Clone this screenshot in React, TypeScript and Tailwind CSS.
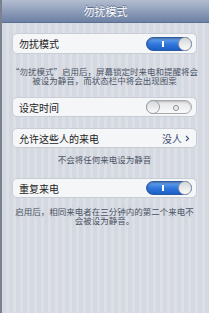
import React from 'react'

const font = { fontFamily: '"Noto Sans CJK SC", "Noto Sans", sans-serif' }

function Toggle({ on }: { on: boolean }) {
  if (on) {
    return (
      <div className="relative w-[46px] h-[14px] rounded-full border border-[#2a5ca8] bg-gradient-to-b from-[#6fa8f0] via-[#2f78dc] to-[#1d5fc4] shadow-[inset_0_1px_2px_rgba(0,0,0,0.35)]">
        <div className="absolute left-[15px] top-[3px] w-[1.5px] h-[6px] bg-white" />
        <div className="absolute right-[-1px] top-[-1px] w-[14px] h-[14px] rounded-full border border-[#9a9ea6] bg-gradient-to-b from-[#d6d8dc] to-[#fbfbfb]" />
      </div>
    )
  }
  return (
    <div className="relative w-[46px] h-[14px] rounded-full border border-[#a7a9ad] bg-gradient-to-b from-[#e4e5e7] to-[#fafafa] shadow-[inset_0_1px_2px_rgba(0,0,0,0.2)]">
      <div className="absolute left-[-1px] top-[-1px] w-[14px] h-[14px] rounded-full border border-[#9a9ea6] bg-gradient-to-b from-[#d6d8dc] to-[#fbfbfb]" />
      <div className="absolute left-[26px] top-[3.5px] w-[6px] h-[6px] rounded-full border border-[#8a8d92]" />
    </div>
  )
}

function Card({ children, className = '' }: { children: React.ReactNode; className?: string }) {
  return (
    <div className={`flex items-center justify-between rounded-[5px] border border-[#c9cdd5] bg-[#f5f6f8] pl-[6px] pr-[4px] ${className}`}>
      {children}
    </div>
  )
}

function Note({ children, className = '' }: { children: React.ReactNode; className?: string }) {
  return (
    <p className={`text-center text-[8.5px] leading-[9px] text-[#4a5364] whitespace-nowrap ${className}`}>
      {children}
    </p>
  )
}

export default function App() {
  return (
    <div
      className="w-[209px] h-[313px] overflow-hidden border-l-2 border-[#7b828f] bg-[repeating-linear-gradient(90deg,#d4d8e0_0px,#d4d8e0_4px,#dcdfe6_4px,#dcdfe6_7px)]"
      style={font}
    >
      <div className="h-[23px] flex items-center justify-center border-b border-[#5d6f90] bg-gradient-to-b from-[#b3bdd0] to-[#6d81a4]">
        <span className="text-[11px] text-white [text-shadow:0_-1px_0_rgba(40,55,85,0.6)]">勿扰模式</span>
      </div>

      <div className="pl-[10px] pr-[12px]">
        <Card className="mt-[10px] h-[21px]">
          <span className="text-[10px] text-[#222]">勿扰模式</span>
          <Toggle on />
        </Card>

        <Note className="mt-[13px] -mx-[4px]">
          “勿扰模式”启用后，屏幕锁定时来电和提醒将会
          <br />
          被设为静音，而状态栏中将会出现图案
        </Note>

        <Card className="mt-[12px] h-[20px]">
          <span className="text-[10px] text-[#222]">设定时间</span>
          <Toggle on={false} />
        </Card>

        <Card className="mt-[11px] h-[20px] pr-[6px]">
          <span className="text-[10px] text-[#222]">允许这些人的来电</span>
          <span className="flex items-center gap-[3px] text-[10px] text-[#3d4f73]">
            没人
            <svg width="5" height="7" viewBox="0 0 5 7" fill="none">
              <path d="M1 1l2.5 2.5L1 6" stroke="#4a5a78" strokeWidth="1.2" />
            </svg>
          </span>
        </Card>

        <Note className="mt-[7px]">不会将任何来电设为静音</Note>

        <Card className="mt-[14px] h-[20px]">
          <span className="text-[10px] text-[#222]">重复来电</span>
          <Toggle on />
        </Card>

        <Note className="mt-[9px] -mx-[4px]">
          启用后，相同来电者在三分钟内的第二个来电不
          <br />
          会被设为静音。
        </Note>
      </div>
    </div>
  )
}
